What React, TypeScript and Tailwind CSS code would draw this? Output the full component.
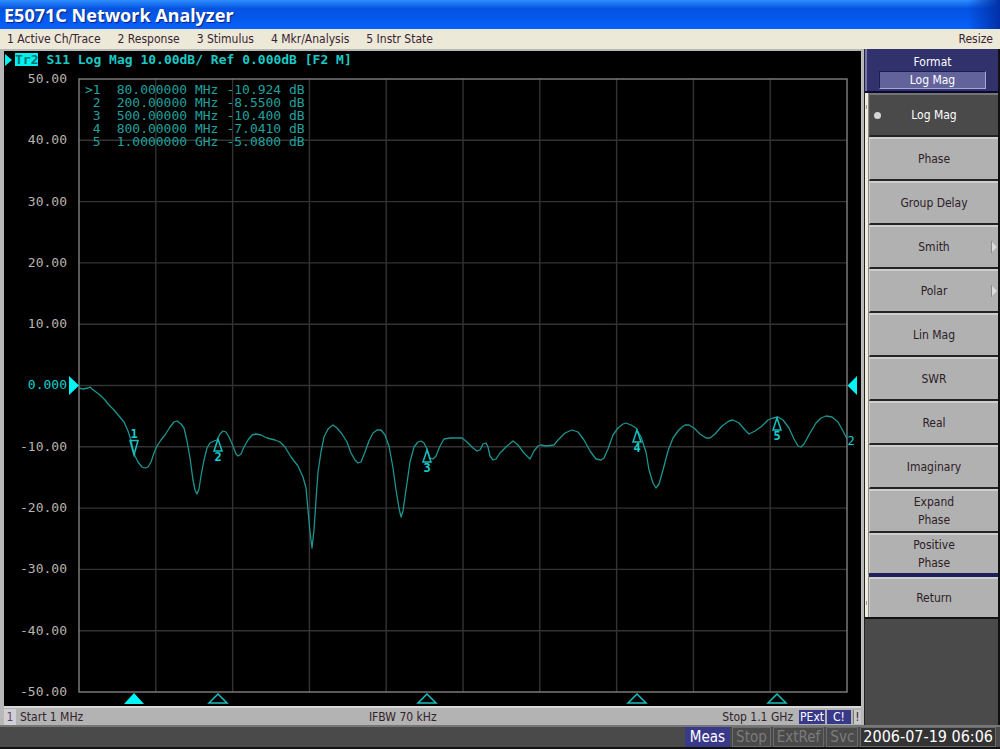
import clsx from "clsx";

const menus = ["1 Active Ch/Trace", "2 Response", "3 Stimulus", "4 Mkr/Analysis", "5 Instr State"];

const markers = [
    [">1", "80.000000 MHz", "-10.924 dB"],
    ["2", "200.00000 MHz", "-8.5500 dB"],
    ["3", "500.00000 MHz", "-10.400 dB"],
    ["4", "800.00000 MHz", "-7.0410 dB"],
    ["5", "1.0000000 GHz", "-5.0800 dB"],
];

const scale = ["50.00", "40.00", "30.00", "20.00", "10.00", "0.000", "-10.00", "-20.00", "-30.00", "-40.00", "-50.00"];

const softKeys = [
    { label: "Log Mag", active: true },
    { label: "Phase" },
    { label: "Group Delay" },
    { label: "Smith", submenu: true },
    { label: "Polar", submenu: true },
    { label: "Lin Mag" },
    { label: "SWR" },
    { label: "Real" },
    { label: "Imaginary" },
    { label: "Expand Phase" },
];

// Plot frame inside the svg
const LEFT = 79;
const RIGHT = 847;
const TOP = 79;
const BOTTOM = 692;

const trace: [number, number][] = [
    [79, 388], [83, 389], [88, 388], [90, 387], [92, 389], [96, 392], [100, 395], [105, 400], [109, 405], [114, 410],
    [119, 416], [124, 422], [128, 431], [131, 440], [133, 449], [135, 456], [138, 462], [142, 467], [145, 468], [148, 467],
    [151, 462], [154, 453], [157, 446], [161, 440], [165, 435], [170, 427], [174, 422], [177, 421], [181, 424], [184, 428],
    [187, 441], [190, 458], [193, 480], [195, 490], [197, 494], [199, 489], [201, 476], [204, 460], [207, 448], [210, 443],
    [214, 441], [217, 440], [220, 434], [223, 431], [226, 432], [229, 437], [233, 446], [236, 454], [238, 456], [241, 454],
    [244, 447], [248, 440], [252, 435], [256, 434], [261, 435], [267, 438], [275, 440], [280, 442], [285, 447], [291, 457],
    [298, 466], [303, 477], [306, 488], [308, 510], [310, 532], [312, 548], [314, 530], [316, 500], [318, 472], [321, 452],
    [324, 437], [328, 429], [333, 425], [337, 428], [342, 434], [347, 442], [351, 453], [355, 460], [358, 463], [361, 462],
    [365, 452], [369, 441], [373, 433], [377, 430], [381, 430], [385, 435], [389, 446], [393, 468], [396, 490], [399, 508],
    [401, 517], [403, 511], [406, 490], [410, 462], [414, 447], [418, 442], [421, 441], [424, 443], [427, 449], [430, 458],
    [433, 459], [436, 456], [440, 446], [444, 439], [450, 438], [456, 438], [462, 438], [467, 442], [473, 448], [477, 451],
    [480, 450], [483, 444], [486, 443], [488, 447], [490, 456], [493, 460], [496, 459], [500, 453], [507, 446], [513, 441],
    [518, 445], [524, 453], [530, 459], [534, 451], [538, 446], [541, 445], [546, 446], [554, 445], [558, 440], [565, 433],
    [572, 430], [578, 432], [584, 440], [590, 451], [596, 459], [601, 460], [604, 458], [608, 449], [613, 435], [618, 428],
    [623, 424], [626, 423], [631, 425], [636, 428], [641, 437], [646, 452], [649, 470], [653, 483], [656, 488], [659, 484],
    [663, 470], [668, 451], [673, 438], [678, 431], [682, 427], [685, 425], [689, 425], [694, 428], [700, 434], [706, 438],
    [710, 438], [715, 434], [722, 426], [729, 421], [733, 420], [739, 423], [745, 430], [749, 434], [755, 431], [762, 426],
    [768, 420], [773, 418], [778, 417], [783, 420], [789, 428], [794, 439], [798, 446], [801, 447], [804, 444], [810, 433],
    [816, 423], [821, 418], [826, 416], [832, 417], [838, 422], [843, 431], [847, 439],
];

// Marker flags on the trace: x, y of the tip
const flags = [
    { n: 2, x: 218, y: 439 },
    { n: 3, x: 427, y: 450 },
    { n: 4, x: 637, y: 430 },
    { n: 5, x: 777, y: 418 },
];

function Plot() {
    const steps = [1, 2, 3, 4, 5, 6, 7, 8, 9];
    return (
        <svg viewBox="67 68 794 638" className="block h-auto min-w-0 flex-1" role="img" aria-label="S11 log magnitude">
            <g stroke="#333333" strokeWidth="1.4">
                {steps.map((i) => {
                    const x = LEFT + ((RIGHT - LEFT) / 10) * i;
                    return <line key={i} x1={x} y1={TOP} x2={x} y2={BOTTOM} />;
                })}
                {steps.map((i) => {
                    const y = TOP + ((BOTTOM - TOP) / 10) * i;
                    return <line key={i} x1={LEFT} y1={y} x2={RIGHT} y2={y} />;
                })}
            </g>
            <rect x={LEFT} y={TOP} width={RIGHT - LEFT} height={BOTTOM - TOP} fill="none" stroke="#808080" strokeWidth="1.4" />
            <polyline points={trace.map((p) => p.join(",")).join(" ")} fill="none" stroke="#1c9490" strokeWidth="1.3" strokeLinejoin="round" />

            {/* Reference level arrows */}
            <path d="M69 376 L79 385.500 L69 395 Z M857 376 L847.500 385.500 L857 395 Z" fill="#00f5f5" />

            {/* Active marker points down, the others up */}
            <g fill="none" stroke="#18bfbf" strokeWidth="1.5">
                <path d="M130 440.500 H138 L134 455 Z" />
                {flags.map((f) => (
                    <path key={f.n} d={`M${f.x} ${f.y} l-4 12 h8 Z`} />
                ))}
                {flags.map((f) => (
                    <path key={f.n} d={`M${f.x} 694 l-9 9 h18 Z`} />
                ))}
            </g>
            <path d="M134 693 l-10 11 h20 Z" fill="#00f5f5" />
            <g fill="#18cfcf" fontFamily="DejaVu Sans Mono, monospace" fontSize="12" fontWeight="bold" textAnchor="middle">
                <text x="134" y="438">1</text>
                {flags.map((f) => (
                    <text key={f.n} x={f.x} y={f.y + 22}>{f.n}</text>
                ))}
                <text x="851" y="445" fontWeight="normal">2</text>
            </g>
        </svg>
    );
}

const keyBase = "relative flex w-full items-center justify-center border-t-2 border-l text-center leading-[18px]";
const keyUp = "border-t-[#cfcfcf] border-l-[#cfcfcf] bg-[#b1b1b1] text-[#2c2028]";
const keyDown = "border-t-[#757575] border-l-[#555] bg-[#4a4a4a] text-white";

function SidePanel() {
    return (
        <aside className="flex w-[136px] flex-col border-r-2 border-l border-r-[#111] border-l-[#222] bg-[#4a4a4a]">
            <div className="flex h-[42px] flex-col border-l-2 border-[#7474b4] bg-[#31316b] px-3 pt-1 text-center text-white">
                <div className="leading-[18px]">Format</div>
                <div className="border border-t-[#1c1c50] border-r-[#a8a8d8] border-b-[#a8a8d8] border-l-[#1c1c50] bg-[#63639c] leading-4">Log Mag</div>
            </div>
            <div className="flex border-t-2 border-b-2 border-t-[#0a0a30] border-b-[#111]">
                <div className="flex w-1 shrink-0 flex-col items-center justify-between border-r border-[#8c8c7c] bg-[#efede0] py-3">
                    <span className="h-1 w-px bg-[#999]" />
                    <span className="h-1 w-px bg-[#999]" />
                </div>
                <div className="min-w-0 flex-1">
                    {softKeys.map((key) => (
                        <button key={key.label} className={clsx(keyBase, "h-11 border-b-2 border-b-[#242424] px-8", key.active ? keyDown : keyUp)}>
                            {key.active && <span className="absolute left-1 size-[7px] rounded-full bg-[#d4d4d4]" />}
                            <span className={clsx(key.label !== "Expand Phase" && "whitespace-nowrap")}>{key.label}</span>
                            {key.submenu && (
                                <svg viewBox="0 0 8 12" className="absolute right-0 h-3 w-2">
                                    <path d="M2 1 L7 6 L2 11 Z" fill="#dcdcdc" />
                                    <path d="M1.500 0 V12" stroke="#8a8a8a" />
                                </svg>
                            )}
                        </button>
                    ))}
                    <button className={clsx(keyBase, keyUp, "h-10 px-8")}>Positive Phase</button>
                    <div className="h-1 bg-[#1f1f5c]" />
                    <button className={clsx(keyBase, keyUp, "h-10")}>Return</button>
                </div>
            </div>
        </aside>
    );
}

export default function App() {
    return (
        <div className="flex min-h-screen flex-col bg-[#4a4a4a] font-['DejaVu_Sans_Condensed','DejaVu_Sans',sans-serif] text-xs">
            <header className="flex h-[29px] items-center bg-linear-to-b from-[#2f8cff] via-[#0452e0] via-30% to-[#0860fb] pl-1">
                <h1 className="font-['Noto_Sans',sans-serif] text-lg font-bold text-white [text-shadow:1px_1px_1px_#0a1f80]">E5071C Network Analyzer</h1>
                <div className="ml-auto h-full w-8 bg-linear-to-r from-transparent to-[#0030a8]" />
            </header>
            <nav className="flex h-5 items-center gap-[17px] bg-[#ece9d8] px-[7px] text-[#3a2230]">
                {menus.map((item) => (
                    <button key={item}>{item}</button>
                ))}
                <button className="ml-auto">Resize</button>
            </nav>

            <div className="flex flex-1">
                <main className="flex min-w-0 flex-1 flex-col border-t-2 border-r-3 border-l-4 border-[#b8b8b8]">
                    <section className="relative flex-1 bg-black font-['DejaVu_Sans_Mono',monospace] text-[13px]">
                        <div className="flex h-[17px] items-center leading-[17px] font-bold text-[#1cc8c5]">
                            <svg viewBox="0 0 8 12" className="mr-[3px] h-3 w-2">
                                <path d="M1 0 L8 6 L1 12 Z" fill="#00f5f5" />
                            </svg>
                            <span className="bg-[#00f0f0] leading-[13px] text-[#087070]">Tr2</span>
                            <span className="ml-2 whitespace-pre">S11 Log Mag 10.00dB/ Ref 0.000dB [F2 M]</span>
                        </div>
                        <div className="flex">
                            <div className="flex w-[63px] flex-col justify-between pt-[3px] pb-[6px] text-right leading-4 text-[#b9b4ae]">
                                {scale.map((v) => (
                                    <span key={v} className={clsx(v === "0.000" && "text-[#18cfcf]")}>{v}</span>
                                ))}
                            </div>
                            <Plot />
                        </div>
                        <table className="absolute top-8 left-[81px] leading-[13px] text-[#20a19d]">
                            <tbody>
                                {markers.map(([n, freq, level]) => (
                                    <tr key={n} className="text-right">
                                        <td className="p-0">{n}</td>
                                        <td className="py-0 pr-2 pl-4">{freq}</td>
                                        <td className="p-0">{level}</td>
                                    </tr>
                                ))}
                            </tbody>
                        </table>
                    </section>
                    <footer className="flex h-[19px] items-center justify-between border-t-2 border-[#d8d8d8] bg-[#b3b3b3] text-[#33222c]">
                        <div className="flex items-center gap-1">
                            <span className="w-3 bg-[#d0d0d4] text-center text-[#604070]">1</span>
                            <span>Start 1 MHz</span>
                        </div>
                        <span>IFBW 70 kHz</span>
                        <div className="flex items-center gap-[2px] leading-[14px]">
                            <span className="mr-1">Stop 1.1 GHz</span>
                            <span className="bg-[#39398a] px-px text-white">PExt</span>
                            <span className="w-6 bg-[#39398a] text-center text-white">C!</span>
                            <span className="w-2 border-l border-[#777] bg-[#c8c8c8] text-center">!</span>
                        </div>
                    </footer>
                </main>
                <SidePanel />
            </div>

            <footer className="flex h-6 items-stretch justify-end gap-[2px] border-t-2 border-b-2 border-t-[#777] border-b-[#111] pr-1 text-[15px] leading-[18px] text-[#7c7c7c]">
                <span className="border border-[#39398a] bg-[#39398a] px-1 text-white">Meas</span>
                <span className="border border-[#6a6a6a] px-[3px]">Stop</span>
                <span className="border border-[#6a6a6a] px-[3px]">ExtRef</span>
                <span className="border border-[#6a6a6a] px-[3px]">Svc</span>
                <time className="border border-[#6a6a6a] bg-[#333] px-[2px] text-base leading-[18px] text-white">2006-07-19 06:06</time>
            </footer>
        </div>
    );
}
